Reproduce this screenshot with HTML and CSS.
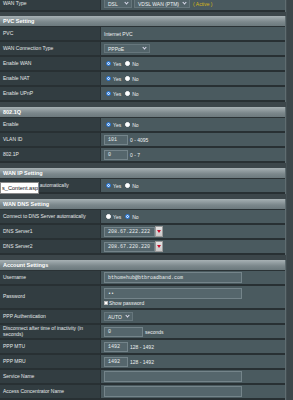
FILE: index.html
```html
<!DOCTYPE html>
<html lang="en">
<head>
  <meta charset="UTF-8" />
  <title>WAN - Internet Connection</title>
  <link rel="stylesheet" href="styles.css">
</head>
<body>
  <div class="page">
    <!-- WAN type (top cut) -->
    <div class="sec first">
      <div class="row">
        <div class="lbl">WAN Type</div>
        <div class="val">
          <span class="sel dsl">DSL <i class="chev"></i></span>
          <span class="sel">VDSL WAN (PTM) <i class="chev"></i></span>
          <span class="active">( Active )</span>
        </div>
      </div>
    </div>

    <div class="sec">
      <div class="head">PVC Setting</div>
      <div class="row"><div class="lbl">PVC</div><div class="val">Internet PVC</div></div>
      <div class="row"><div class="lbl">WAN Connection Type</div><div class="val"><span class="sel wide">PPPoE <i class="chev"></i></span></div></div>
      <div class="row"><div class="lbl">Enable WAN</div><div class="val"><span class="radio on"></span>Yes <span class="radio"></span>No</div></div>
      <div class="row"><div class="lbl">Enable NAT</div><div class="val"><span class="radio on"></span>Yes <span class="radio"></span>No</div></div>
      <div class="row"><div class="lbl">Enable UPnP</div><div class="val"><span class="radio on"></span>Yes <span class="radio"></span>No</div></div>
    </div>

    <div class="sec">
      <div class="head">802.1Q</div>
      <div class="row"><div class="lbl">Enable</div><div class="val"><span class="radio on"></span>Yes <span class="radio"></span>No</div></div>
      <div class="row"><div class="lbl">VLAN ID</div><div class="val"><span class="inp short">101</span> 0 - 4095</div></div>
      <div class="row"><div class="lbl">802.1P</div><div class="val"><span class="inp short">0</span> 0 - 7</div></div>
    </div>

    <div class="sec">
      <div class="head">WAN IP Setting</div>
      <div class="row tip-row">
        <div class="lbl">Get the WAN IP automatically</div>
        <div class="val"><span class="radio on"></span>Yes <span class="radio"></span>No</div>
        <div class="tip">s_Content.asp</div>
      </div>
    </div>

    <div class="sec">
      <div class="head">WAN DNS Setting</div>
      <div class="row"><div class="lbl">Connect to DNS Server automatically</div><div class="val"><span class="radio"></span>Yes <span class="radio on"></span>No</div></div>
      <div class="row"><div class="lbl">DNS Server1</div><div class="val"><span class="inp dns">208.67.222.222</span><span class="drop"><i></i></span></div></div>
      <div class="row"><div class="lbl">DNS Server2</div><div class="val"><span class="inp dns">208.67.220.220</span><span class="drop"><i></i></span></div></div>
    </div>

    <div class="sec">
      <div class="head">Account Settings</div>
      <div class="row"><div class="lbl">Username</div><div class="val"><span class="inp long">bthomehub@btbroadband.com</span></div></div>
      <div class="row tall">
        <div class="lbl">Password</div>
        <div class="val col">
          <span class="inp long">••</span>
          <span class="check"><i></i>Show password</span>
        </div>
      </div>
      <div class="row"><div class="lbl">PPP Authentication</div><div class="val"><span class="sel">AUTO <i class="chev"></i></span></div></div>
      <div class="row"><div class="lbl">Disconnect after time of inactivity (in seconds)</div><div class="val"><span class="inp mid">0</span> seconds</div></div>
      <div class="row"><div class="lbl">PPP MTU</div><div class="val"><span class="inp short">1492</span> 128 - 1492</div></div>
      <div class="row"><div class="lbl">PPP MRU</div><div class="val"><span class="inp short">1492</span> 128 - 1492</div></div>
      <div class="row"><div class="lbl">Service Name</div><div class="val"><span class="inp long"></span></div></div>
      <div class="row"><div class="lbl">Access Concentrator Name</div><div class="val"><span class="inp long"></span></div></div>
    </div>
  </div>
</body>
</html>
```
FILE: styles.css
```css
body { margin: 0; background: #3c464a; font-family: "Liberation Sans", Arial, sans-serif; font-size: 5px; color: #e4e8e9; overflow: hidden; }
.page { width: 286px; border-right: 1px solid #66737738; }
.sec { margin-bottom: 5px; border-right: 1px solid #5f6c70; }
.sec.first { margin-top: -3px; margin-bottom: 4px; }
.head { height: 11px; line-height: 11px; padding-left: 3px; font-size: 5.5px; font-weight: bold; color: #fff; background: linear-gradient(#a7b1b4, #7b878b 60%, #6c797d); border-bottom: 1px solid #2a3235; box-sizing: border-box; }
.row { display: grid; grid-template-columns: 100px 1fr; min-height: 13px; border-bottom: 2px solid #283033; position: relative; }
.row.tall { min-height: 22px; }
.lbl { background: #323d41; padding: 0 3px; display: flex; align-items: center; line-height: 5.5px; }
.val { background: #4a5a5f; border-left: 1px solid #283033; padding: 0 3px; display: flex; align-items: center; gap: 2px; color: #eef1f1; white-space: nowrap; }
.val.col { flex-direction: column; align-items: flex-start; justify-content: center; gap: 1px; }
.sel { display: inline-flex; align-items: center; justify-content: space-between; gap: 4px; height: 9px; padding: 0 3px; background: #53646a; border: 1px solid #66767c; box-sizing: border-box; white-space: nowrap; flex-shrink: 0; }
.sel.dsl { width: 28px; }
.sel.wide { width: 46px; }
.chev { flex-shrink: 0; width: 2px; height: 2px; border-right: 1px solid #dde; border-bottom: 1px solid #dde; transform: rotate(45deg); margin-top: -2px; }
.active { color: #d8b716; margin-left: 1px; }
.radio { width: 3px; height: 3px; border-radius: 50%; background: #fff; border: 1px solid #fff; margin-left: 2px; }
.radio.on { background: #2b7ad8; border-color: #2b7ad8; box-shadow: inset 0 0 0 0.7px #fff; }
.inp { display: inline-flex; align-items: center; height: 10px; padding: 0 3px; box-sizing: border-box; background: #55666c; border: 1px solid #74848a; font-family: "Liberation Mono", monospace; font-size: 5px; color: #e8ecec; }
.inp.short { width: 24px; }
.inp.mid { width: 39px; }
.inp.dns { width: 51px; }
.inp.long { width: 138px; height: 11px; }
.drop { width: 8px; height: 11px; background: linear-gradient(#e4e4e4, #c9c9c9); border: 1px solid #999; box-sizing: border-box; display: flex; align-items: center; justify-content: center; margin-left: -2px; }
.drop i { width: 0; height: 0; border-left: 2px solid transparent; border-right: 2px solid transparent; border-top: 3px solid #c8102e; }
.check { display: flex; align-items: center; gap: 1px; }
.check i { width: 4px; height: 4px; background: #fff; border: 1px solid #bbb; box-sizing: border-box; }
.tip { position: absolute; left: 0; top: 3px; width: 39px; height: 12px; background: #fff; border: 1px solid #8a8a8a; box-sizing: border-box; color: #111; font-size: 5.6px; line-height: 10px; padding-left: 1px; overflow: hidden; white-space: nowrap; }
```
